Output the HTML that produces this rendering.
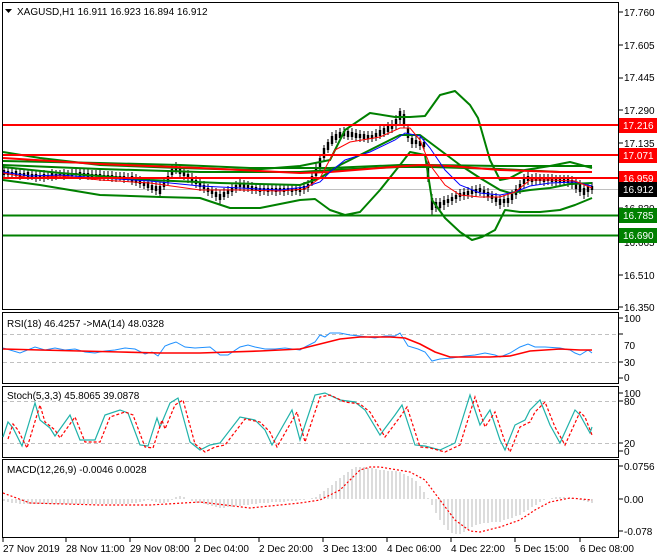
<!DOCTYPE html>
<html><head><meta charset="utf-8"><style>
html,body{margin:0;padding:0;background:#fff;width:660px;height:560px;overflow:hidden}
svg{display:block;font-family:"Liberation Sans",sans-serif;font-size:10px}
</style></head><body>
<svg width="660" height="560" viewBox="0 0 660 560" xmlns="http://www.w3.org/2000/svg">
<rect width="660" height="560" fill="#fff"/>
<g fill="none" stroke="#000" stroke-width="1">
<rect x="2.5" y="2.5" width="616" height="307"/>
<rect x="2.5" y="312.5" width="616" height="71"/>
<rect x="2.5" y="386.5" width="616" height="71"/>
<rect x="2.5" y="459.5" width="616" height="78"/>
</g>
<g stroke="#000">
<path d="M619 12h4M619 45h4M619 78h4M619 110h4M619 143h4M619 208h4M619 275h4M619 307h4M619 318h4M619 334h4M619 362h4M619 378h4M619 393h4M619 401h4M619 443h4M619 451h4M619 466h4M619 499h4M619 531h4"/>
<path d="M3 538v4M66 538v4M130 538v4M195 538v4M259 538v4M323 538v4M387 538v4M451 538v4M515 538v4M580 538v4"/>
</g>
<g fill="#000">
<text x="624" y="16">17.760</text><text x="624" y="49">17.605</text><text x="624" y="81">17.445</text>
<text x="624" y="114">17.290</text><text x="624" y="147">17.135</text><text x="624" y="212">16.820</text>
<text x="624" y="246">16.665</text>
<text x="624" y="279">16.510</text><text x="624" y="311">16.350</text>
<text x="624" y="322">100</text><text x="624" y="349">70</text><text x="624" y="366">30</text><text x="624" y="381">0</text>
<text x="624" y="397">100</text><text x="624" y="405">80</text><text x="624" y="447">20</text><text x="624" y="455">0</text>
<text x="624" y="470">0.0756</text><text x="624" y="503">0.00</text><text x="624" y="535">-0.078</text>
<text x="3" y="552">27 Nov 2019</text><text x="66" y="552">28 Nov 11:00</text><text x="130" y="552">29 Nov 08:00</text>
<text x="195" y="552">2 Dec 04:00</text><text x="259" y="552">2 Dec 20:00</text><text x="323" y="552">3 Dec 13:00</text>
<text x="387" y="552">4 Dec 06:00</text><text x="451" y="552">4 Dec 22:00</text><text x="515" y="552">5 Dec 15:00</text>
<text x="580" y="552">6 Dec 08:00</text>
</g>
<line x1="3" y1="189.5" x2="618" y2="189.5" stroke="#c0c0c0"/>
<!-- candles wicks -->
<path fill="none" stroke="#000" stroke-width="1" d="M4 166v12M8 168v10M12 167v12M16 169v9M20 168v12M24 170v9M28 169v11M32 170v10M36 170v12M40 171v10M44 170v12M48 171v9M52 169v12M56 170v10M60 170v9M64 169v11M68 170v9M72 169v10M76 169v9M80 168v12M84 169v10M88 169v11M92 170v10M96 170v9M100 170v11M104 171v10M108 171v9M112 171v11M116 172v10M120 172v9M124 172v11M128 173v9M132 172v13M136 174v12M140 176v12M144 178v11M148 178v13M152 181v12M156 182v13M160 182v16M164 178v12M168 172v13M172 165v13M176 162v12M180 165v12M184 168v12M188 170v13M192 173v12M196 176v12M200 179v12M204 181v12M208 184v12M212 186v12M216 188v13M220 190v14M224 188v12M228 186v12M232 184v12M236 181v12M240 179v12M244 180v12M248 181v11M252 182v12M256 183v11M260 184v12M264 184v11M268 184v12M272 184v11M276 184v12M280 184v11M284 184v12M288 184v11M292 184v12M296 184v11M300 184v12M304 182v12M308 180v12M312 172v14M316 163v15M320 154v16M324 145v16M328 139v14M332 132v14M336 130v13M340 128v13M344 127v12M348 127v13M352 128v12M356 129v12M360 130v12M364 131v11M368 131v12M372 131v11M376 129v12M380 126v13M384 124v13M388 122v13M392 120v13M396 115v15M400 108v16M404 110v18M408 124v18M412 134v14M416 136v12M420 137v13M424 138v13M428 160v22M432 194v22M436 198v14M440 198v14M444 196v14M448 195v12M452 193v12M456 191v12M460 189v12M464 188v12M468 187v12M472 186v12M476 185v12M480 184v12M484 186v12M488 188v13M492 191v12M496 193v13M500 195v14M504 195v12M508 194v13M512 190v14M516 185v14M520 180v14M524 174v14M528 172v13M532 174v12M536 173v12M540 174v11M544 174v12M548 174v11M552 174v12M556 175v11M560 175v12M564 175v11M568 175v12M572 176v13M576 178v15M580 180v16M584 184v15M588 183v14M592 182v12"/>
<!-- candle bodies -->
<path fill="none" stroke="#000" stroke-width="2.4" d="M4 170v5M8 171v4M12 172v3M16 171v5M20 173v4M24 173v3M28 172v5M32 174v3M36 174v4M40 175v3M44 174v5M48 175v2M52 173v5M56 174v3M60 174v2M64 173v4M68 174v2M72 173v3M76 173v2M80 172v5M84 173v3M88 173v4M92 174v3M96 174v2M100 174v4M104 175v3M108 175v2M112 175v4M116 176v3M120 176v2M124 176v4M128 177v2M132 176v6M136 178v5M140 180v4M144 182v4M148 182v6M152 185v5M156 186v5M160 186v8M164 182v5M168 176v6M172 169v6M176 166v5M180 169v5M184 172v4M188 174v5M192 177v5M196 180v4M200 183v4M204 185v4M208 188v4M212 190v4M216 192v5M220 194v6M224 192v5M228 190v4M232 188v4M236 185v4M240 183v4M244 184v4M248 185v3M252 186v4M256 187v3M260 188v4M264 188v3M268 188v4M272 188v3M276 188v4M280 188v3M284 188v4M288 188v3M292 188v4M296 188v3M300 188v4M304 186v4M308 184v4M312 176v8M316 167v9M320 158v9M324 148v10M328 142v8M332 136v8M336 134v6M340 132v6M344 131v5M348 131v6M352 132v5M356 133v5M360 134v4M364 134v5M368 135v4M372 135v4M376 133v4M380 130v6M384 128v6M388 126v6M392 124v5M396 119v7M400 111v9M404 114v10M408 128v10M412 138v6M416 140v4M420 141v5M424 142v5M428 165v12M432 198v12M436 202v6M440 202v6M444 200v5M448 199v4M452 197v4M456 195v4M460 193v4M464 192v4M468 191v4M472 190v4M476 189v4M480 188v4M484 190v4M488 192v5M492 195v4M496 197v5M500 199v6M504 199v4M508 198v5M512 194v6M516 189v6M520 184v6M524 178v6M528 176v5M532 178v4M536 177v4M540 178v3M544 178v4M548 178v3M552 178v4M556 179v3M560 179v4M564 179v3M568 179v4M572 180v5M576 182v7M580 184v8M584 188v7M588 186v6M592 186v4"/>
<g fill="none" stroke="#008000" stroke-width="2" stroke-linejoin="round">
<polyline points="3,152 40,158 100,165 180,168 250,170 300,166 330,160 345,130 370,113 395,117 410,117 425,116 440,95 455,91 470,105 478,118 490,160 500,180 510,178 525,170 550,166 570,162 592,168"/>
<polyline points="3,180 40,185 100,195 160,197 200,198 230,208 260,208 300,200 315,199 330,210 345,215 360,212 380,190 400,165 410,152 425,155 432,200 445,218 460,232 472,240 482,237 495,230 505,210 520,212 540,212 560,210 575,205 592,198"/>
<polyline points="3,167 60,173 150,180 220,183 300,185 320,178 340,165 370,150 400,135 420,135 440,150 460,165 480,178 500,190 510,193 530,190 550,188 570,184 592,183"/>
<polyline points="3,165 100,169 200,172 300,172 330,170 400,167 430,167 500,169 560,172 592,172"/>
<polyline points="3,161 100,163 180,165 250,168 330,168 400,165 430,165 500,166 560,166 592,166"/>
</g>
<polyline fill="none" stroke="#f00" stroke-width="2" points="3,158 100,164 200,168 300,173 330,172 380,168 420,165 450,166 500,170 560,172 592,172"/>
<g fill="none" stroke-width="1">
<polyline stroke="#00f" points="3,172 30,176 60,175 100,178 150,181 200,186 240,188 280,190 305,187 320,182 330,172 345,160 370,152 395,140 405,133 420,136 430,148 445,170 460,185 480,193 500,195 515,192 530,186 550,183 575,182 592,186"/>
<polyline stroke="#f00" points="3,173 30,178 60,176 100,180 150,183 200,190 240,190 280,191 305,189 320,178 335,150 350,142 380,137 400,128 410,128 420,140 430,165 445,185 460,195 480,197 500,197 515,192 530,180 550,180 575,181 592,188"/>
</g>
<g stroke-width="2">
<line x1="3" y1="125" x2="618" y2="125" stroke="#f00"/>
<line x1="3" y1="155" x2="618" y2="155" stroke="#f00"/>
<line x1="3" y1="178" x2="618" y2="178" stroke="#f00"/>
<line x1="3" y1="215.5" x2="618" y2="215.5" stroke="#008000"/>
<line x1="3" y1="235.5" x2="618" y2="235.5" stroke="#008000"/>
</g>
<g>
<rect x="619" y="118" width="38" height="15" fill="#f00"/><text x="623" y="129" fill="#fff">17.216</text>
<rect x="619" y="148" width="38" height="15" fill="#f00"/><text x="623" y="159" fill="#fff">17.071</text>
<rect x="619" y="171" width="38" height="15" fill="#f00"/><text x="623" y="182" fill="#fff">16.959</text>
<rect x="619" y="182" width="38" height="15" fill="#000"/><text x="623" y="193" fill="#fff">16.912</text>
<rect x="619" y="208" width="38" height="15" fill="#008000"/><text x="623" y="219" fill="#fff">16.785</text>
<rect x="619" y="228" width="38" height="15" fill="#008000"/><text x="623" y="239" fill="#fff">16.690</text>
</g>
<rect x="3" y="3" width="200" height="15" fill="#fff"/>
<path d="M5 9h7l-3.5 4z" fill="#000"/>
<text x="17" y="15" fill="#000">XAGUSD,H1  16.911 16.923 16.894 16.912</text>
<g stroke="#c0c0c0" stroke-dasharray="4,3"><line x1="3" y1="334.5" x2="618" y2="334.5"/><line x1="3" y1="362.5" x2="618" y2="362.5"/>
<line x1="3" y1="401.5" x2="618" y2="401.5"/><line x1="3" y1="443.5" x2="618" y2="443.5"/></g>
<text x="7" y="327" fill="#000">RSI(18) 46.4257  -&gt;MA(14) 48.0328</text>
<polyline fill="none" stroke="#1e90ff" points="3,348 10,350 20,353 35,347 45,350 55,348 65,350 75,349 85,352 95,353 105,351 115,350 125,348 135,349 145,354 152,352 158,356 165,346 170,344 176,342 185,347 195,348 210,347 220,355 228,355 240,347 248,345 255,347 265,349 275,349 285,348 300,350 305,347 315,342 320,335 325,337 330,333 340,333 350,335 360,336 375,338 385,336 395,336 400,333 408,346 418,349 425,352 432,361 440,359 452,358 465,356 475,355 485,353 495,355 500,357 510,353 520,347 528,344 535,347 545,347 560,348 570,350 575,353 580,355 588,350 592,353"/>
<polyline fill="none" stroke="#f00" stroke-width="1.6" points="3,349 40,350 80,351 120,352 160,353 200,353 260,351 300,349 320,344 340,339 360,337 390,337 405,338 420,344 435,352 450,357 465,357 490,357 510,356 530,351 560,349 580,350 592,350"/>
<text x="7" y="399" fill="#000">Stoch(5,3,3) 45.8065 39.0878</text>
<polyline fill="none" stroke="#20b2aa" stroke-width="1.2" points="3,437 8,422 13,428 22,446 35,403 40,420 50,428 55,436 70,415 80,440 95,440 105,415 120,410 128,413 140,445 148,446 157,418 160,427 170,403 178,398 190,442 200,450 210,445 220,443 240,417 255,420 265,430 272,445 292,410 300,440 315,395 325,393 340,400 355,402 365,410 380,435 395,415 402,405 415,445 425,446 440,450 455,443 470,395 480,425 490,410 500,440 505,450 515,425 525,420 530,410 540,400 550,425 560,443 575,410 580,415 590,433 592,427"/>
<polyline fill="none" stroke="#f00" stroke-width="1.2" stroke-dasharray="3,2" transform="translate(5,2)" points="3,437 8,422 13,428 22,446 35,403 40,420 50,428 55,436 70,415 80,440 95,440 105,415 120,410 128,413 140,445 148,446 157,418 160,427 170,403 178,398 190,442 200,450 210,445 220,443 240,417 255,420 265,430 272,445 292,410 300,440 315,395 325,393 340,400 355,402 365,410 380,435 395,415 402,405 415,445 425,446 440,450 455,443 470,395 480,425 490,410 500,440 505,450 515,425 525,420 530,410 540,400 550,425 560,443 575,410 580,415 587,433"/>
<!-- MACD histogram -->
<path fill="none" stroke="#b8b8b8" stroke-width="1" d="M4 499V501M8 499V502M12 499V503M16 499V503M20 499V504M24 499V504M28 499V504M32 499V504M36 499V504M40 499V504M44 499V504M48 499V504M52 499V504M56 499V504M60 499V504M64 499V504M68 499V504M72 499V504M76 499V504M80 499V504M84 499V504M88 499V504M92 499V504M96 499V504M100 499V504M104 499V504M108 499V504M112 499V504M116 499V504M120 499V504M124 499V504M128 499V504M132 499V503M136 499V503M140 499V502M144 499V501M148 499V500M152 499V501M156 499V502M160 499V503M164 499V503M168 499V502M172 499V500M176 499V497M180 499V496M184 499V497M188 499V499M192 499V501M196 499V503M200 499V503M204 499V504M208 499V505M212 499V506M216 499V507M220 499V508M224 499V508M228 499V507M232 499V507M236 499V506M240 499V506M244 499V505M248 499V505M252 499V504M256 499V504M260 499V503M264 499V503M268 499V503M272 499V502M276 499V502M280 499V502M284 499V502M288 499V501M292 499V501M296 499V501M300 499V500M304 499V500M308 499V499M312 499V498M316 499V497M320 499V494M324 499V491M328 499V488M332 499V485M336 499V481M340 499V478M344 499V475M348 499V472M352 499V469M356 499V467M360 499V467M364 499V467M368 499V468M372 499V468M376 499V469M380 499V470M384 499V470M388 499V471M392 499V471M396 499V471M400 499V472M404 499V474M408 499V476M412 499V478M416 499V481M420 499V486M424 499V492M428 499V498M432 499V505M436 499V513M440 499V520M444 499V525M448 499V530M452 499V533M456 499V534M460 499V534M464 499V532M468 499V530M472 499V527M476 499V525M480 499V524M484 499V523M488 499V523M492 499V522M496 499V522M500 499V522M504 499V520M508 499V519M512 499V518M516 499V516M520 499V515M524 499V512M528 499V510M532 499V507M536 499V505M540 499V502M544 499V500M548 499V499M552 499V498M556 499V497M560 499V497M564 499V497M568 499V498M572 499V498M576 499V499M580 499V500M584 499V501M588 499V502M592 499V503"/>
<text x="7" y="473" fill="#000">MACD(12,26,9) -0.0046 0.0028</text>
<polyline fill="none" stroke="#f00" stroke-width="1.2" stroke-dasharray="2,2" points="3,493 30,503 100,505 150,505 200,502 250,508 300,503 320,500 340,490 360,470 370,467 380,467 410,472 425,480 440,500 455,520 470,531 480,532 500,527 520,520 535,510 550,502 570,498 592,500"/>
</svg>
</body></html>
